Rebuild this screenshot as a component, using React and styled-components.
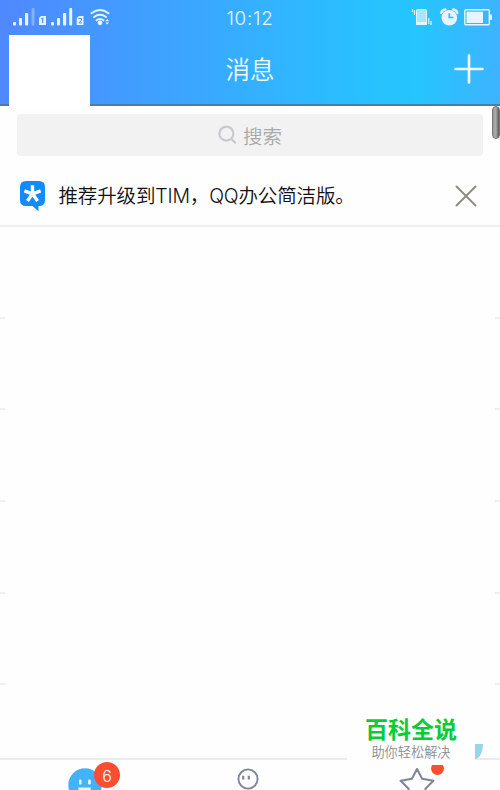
import React from "react";
import styled, { createGlobalStyle } from "styled-components";

const GlobalStyle = createGlobalStyle`
  * {
    box-sizing: border-box;
  }

  body {
    margin: 0;
    background: #fefefe;
    font-family: Inter, "Noto Sans CJK SC", sans-serif;
    font-weight: 350;
    overflow: hidden;
  }

  svg {
    display: block;
    flex-shrink: 0;
  }
`;

const Screen = styled.div`
  position: relative;
  display: flex;
  flex-direction: column;
  width: 500px;
  height: 790px;
  overflow: hidden;
`;

const Header = styled.header`
  height: 106px;
  background: linear-gradient(
    90deg,
    #5088ff 0%,
    #429bff 24%,
    #36aeff 48%,
    #28c0ff 72%,
    #25c5ff 83%,
    #3db3ff 100%
  );
  box-shadow: inset 0 -2px 0 #4680a8;
`;

const StatusBar = styled.div`
  display: grid;
  grid-template-columns: 1fr 60px 1fr;
  height: 35px;
  color: #e4f5ff;
`;

const Time = styled.div`
  font-size: 18.8px;
  letter-spacing: 0.8px;
  line-height: 37px;
  text-align: center;
  white-space: nowrap;
`;

const TitleBar = styled.div`
  display: grid;
  grid-template-columns: 81px 1fr 81px;
  height: 71px;
  padding: 0 9px;
`;

const Avatar = styled.div`
  background: #fff;
`;

const Title = styled.h1`
  margin: 0;
  color: #f2fbff;
  font-size: 24.5px;
  font-weight: 350;
  line-height: 71px;
  text-align: center;
`;

const AddButton = styled.button`
  display: flex;
  justify-content: flex-end;
  padding: 19px 7px 0 0;
  border: 0;
  background: none;
`;

const SearchArea = styled.div`
  height: 60px;
  padding: 8px 17px 0;
`;

const SearchBox = styled.div`
  display: flex;
  align-items: center;
  justify-content: center;
  gap: 6px;
  height: 42px;
  border-radius: 4px;
  background: #f2f2f2;
  color: #a9a9a9;
  font-size: 19.5px;
  line-height: 42px;
`;

const SearchLabel = styled.span`
  padding-top: 3px;
`;

const Notice = styled.div`
  display: flex;
  align-items: center;
  height: 61px;
  padding: 0 23px 0 20px;
  border-bottom: 2px solid #eeeeef;
`;

const NoticeText = styled.p`
  flex: 1;
  margin: 0 0 0 12.5px;
  padding-top: 2px;
  color: #111;
  font-size: 19.5px;
  letter-spacing: -0.15px;
  line-height: 59px;
  white-space: nowrap;
`;

const List = styled.div`
  flex: 1;
`;

const Row = styled.div`
  display: flex;
  justify-content: space-between;
  align-items: flex-end;
  height: 91.7px;

  &::before,
  &::after {
    content: "";
    width: 5px;
    height: 2px;
    background: #efefef;
  }
`;

const TabBar = styled.nav`
  display: grid;
  grid-template-columns: 1fr 1fr 1fr;
  height: 32px;
  border-top: 2px solid #e9ebec;
`;

const Tab = styled.div`
  display: flex;
  justify-content: center;
  padding: ${({ $pad }) => $pad};
  overflow: hidden;
`;

const Badge = styled.span`
  position: absolute;
  left: 94px;
  top: 762px;
  width: 26px;
  height: 26px;
  border-radius: 50%;
  background: #fa4d32;
  color: #fff;
  font-size: 16px;
  line-height: 28px;
  text-align: center;
`;

const Dot = styled.span`
  position: absolute;
  left: 431px;
  top: 762px;
  width: 13px;
  height: 13px;
  border-radius: 50%;
  background: #fa4d32;
`;

const ScrollThumb = styled.div`
  position: absolute;
  right: 0;
  top: 106px;
  width: 8px;
  height: 33px;
  border: 1px solid #777;
  border-radius: 4px;
  background: linear-gradient(90deg, #999 0%, #aaa 45%, #888 70%, #555 100%);
`;

const Watermark = styled.div`
  position: absolute;
  left: 347px;
  top: 705px;
  width: 128px;
  height: 60px;
  background: #fefefe;
  text-align: center;
`;

const Brand = styled.div`
  margin-top: 9px;
  color: #05cd36;
  font-size: 23px;
  font-weight: 700;
  line-height: 33px;
`;

const Slogan = styled.div`
  margin-top: -4px;
  color: #8c8c8c;
  font-size: 13.2px;
  line-height: 19px;
`;

const Corner = styled.div`
  position: absolute;
  left: 475px;
  top: 744px;
  width: 8px;
  height: 15px;
  border-bottom-right-radius: 8px 15px;
  background: #93d6ee;
`;

const SignalIcons = () => (
  <svg width="120" height="35" viewBox="0 0 120 35" fill="currentColor">
    <rect x="13" y="22" width="3" height="3.5" rx="1" />
    <rect x="19" y="18" width="3" height="7.5" rx="1" />
    <rect x="25" y="13" width="3.2" height="12.5" rx="1" />
    <rect x="31.5" y="8" width="3" height="17.5" rx="1" opacity=".35" />
    <path d="M41 16h5v9h-7v-7z" />
    <path d="M41.5 19l1.2-.8V23" fill="none" stroke="#4b92ff" strokeWidth="1.2" />
    <rect x="51" y="22" width="3" height="3.5" rx="1" />
    <rect x="57" y="18" width="3" height="7.5" rx="1" />
    <rect x="63" y="13" width="3.2" height="12.5" rx="1" />
    <rect x="69.2" y="8" width="3" height="17.5" rx="1" />
    <path d="M79 16h4.5v9h-6.8v-7z" />
    <path d="M78.2 18.3h3.2v2.2l-2.6 2.4h3.2" fill="none" stroke="#4698ff" strokeWidth="1" />
    <g fill="none" stroke="currentColor" strokeWidth="2" strokeLinecap="round">
      <path d="M91.5 13.3q8.5-6.5 17 0" />
      <path d="M94 17q6-4.4 12 0" />
      <path d="M96.5 20.2q3.5-2.6 7 0" />
    </g>
    <circle cx="100" cy="22.8" r="2.4" />
    <path d="M105.3 21.2l1.9-2.2 1.9 2.2zM105.3 22.4l1.9 2.2 1.9-2.2z" />
  </svg>
);

const DeviceIcons = () => (
  <svg width="220" height="35" viewBox="280 0 220 35" fill="currentColor">
    <rect x="416.5" y="9.5" width="10" height="15" rx="1" fill="#a5e7ff" stroke="currentColor" />
    <rect x="416" y="22" width="11" height="3" />
    <path
      d="M412.5 9v3M414.5 10v5M428.8 18v6M431 21v4"
      fill="none"
      stroke="currentColor"
      strokeWidth="1.2"
    />
    <circle cx="449.3" cy="17.7" r="7.8" />
    <path
      d="M441.2 13q.8-3.2 4.2-3.5M457.4 13q-.8-3.2-4.2-3.5"
      fill="none"
      stroke="currentColor"
      strokeWidth="2.3"
      strokeLinecap="round"
    />
    <path d="M449.3 13.2v4.3h4.2" fill="none" stroke="#28bfff" strokeWidth="1.7" />
    <rect x="464.8" y="9.8" width="24.5" height="15" rx="1" fill="none" stroke="currentColor" strokeWidth="1.4" />
    <rect x="466.5" y="11.7" width="16.5" height="11.3" />
    <rect x="490" y="14.5" width="2" height="5.3" />
  </svg>
);

const PlusIcon = () => (
  <svg width="30" height="30" viewBox="0 0 30 30" stroke="#f2fbff" strokeWidth="2.7" strokeLinecap="round">
    <path d="M15 1.5v27M1.5 15h27" />
  </svg>
);

const SearchIcon = () => (
  <svg width="19" height="20" viewBox="0 0 19 20" fill="none" stroke="#c9c9cf" strokeWidth="2.2" strokeLinecap="round">
    <circle cx="8.4" cy="8.6" r="7" />
    <path d="M13.5 14l3.7 3.8" />
  </svg>
);

const TimIcon = () => (
  <svg width="26" height="32" viewBox="0 0 26 32">
    <path
      d="M6 1h13q6 0 6 6v13q0 6-6 6h-.5v5.2L12.5 26H6q-6 0-6-6V7q0-6 6-6z"
      fill="#128bfd"
    />
    <path
      d="M12.5 13.8V5.3M12.5 13.8L4.4 10.9M12.5 13.8L20.6 10.9M12.5 13.8L7.4 21M12.5 13.8L17.6 21"
      stroke="#fff"
      strokeWidth="3.4"
    />
  </svg>
);

const CloseIcon = () => (
  <svg width="22" height="22" viewBox="0 0 22 22" stroke="#8e8c83" strokeWidth="2" strokeLinecap="round">
    <path d="M1.5 1.5l19 19M20.5 1.5l-19 19" />
  </svg>
);

const MessageIcon = () => (
  <svg width="34" height="34" viewBox="0 0 34 34">
    <circle cx="17" cy="17" r="16.7" fill="#42b3fb" />
    <rect x="11" y="11.5" width="2.5" height="5" rx="1" fill="#fff" />
    <rect x="20.2" y="11.5" width="2.5" height="5" rx="1" fill="#fff" />
    <path d="M10 19.5h13q-1 7-6.5 7T10 19.5z" fill="#e5f7ff" />
  </svg>
);

const ContactIcon = () => (
  <svg width="22" height="22" viewBox="0 0 22 22" stroke="#81869a" fill="none">
    <circle cx="11" cy="11" r="9.6" strokeWidth="1.9" />
    <path d="M6.2 7.8v3.8M11.8 7.8v3.8" strokeWidth="2.2" />
  </svg>
);

const StarIcon = () => (
  <svg width="36" height="36" viewBox="0 0 36 36">
    <path
      d="M18 2l5.1 9.8 11.3 1.9-8 8 1.6 11.5-10-5.2-10 5.2 1.6-11.5-8-8 11.3-1.9z"
      fill="none"
      stroke="#7f8499"
      strokeWidth="2"
      strokeLinejoin="round"
    />
  </svg>
);

const rows = [1, 2, 3, 4, 5];

const App = () => {
  return (
    <>
      <GlobalStyle />
      <Screen>
        <Header>
          <StatusBar>
            <SignalIcons />
            <Time>10:12</Time>
            <DeviceIcons />
          </StatusBar>
          <TitleBar>
            <Avatar />
            <Title>消息</Title>
            <AddButton aria-label="add">
              <PlusIcon />
            </AddButton>
          </TitleBar>
        </Header>
        <SearchArea>
          <SearchBox>
            <SearchIcon />
            <SearchLabel>搜索</SearchLabel>
          </SearchBox>
        </SearchArea>
        <Notice>
          <TimIcon />
          <NoticeText>推荐升级到TIM，QQ办公简洁版。</NoticeText>
          <CloseIcon />
        </Notice>
        <List>
          {rows.map((row) => (
            <Row key={row} />
          ))}
        </List>
        <TabBar>
          <Tab $pad="8px 0 0 3px">
            <MessageIcon />
          </Tab>
          <Tab $pad="8px 3px 0 0">
            <ContactIcon />
          </Tab>
          <Tab $pad="7px 0 0">
            <StarIcon />
          </Tab>
        </TabBar>
        <Badge>6</Badge>
        <Dot />
        <ScrollThumb />
        <Watermark>
          <Brand>百科全说</Brand>
          <Slogan>助你轻松解决</Slogan>
        </Watermark>
        <Corner />
      </Screen>
    </>
  );
};

export default App;
